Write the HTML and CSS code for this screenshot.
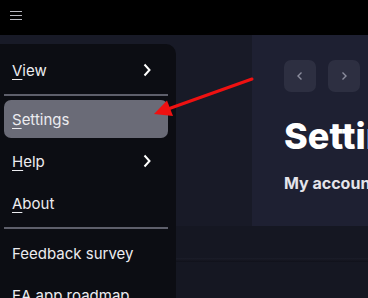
FILE: index.html
```html
<!DOCTYPE html>
<html lang="en">
<head>
  <meta charset="UTF-8" />
  <title>EA app - Settings</title>
  <link rel="stylesheet" href="styles.css">
</head>
<body>

  <header class="topbar">
    <span class="burger"><i></i><i></i><i></i></span>
  </header>

  <div class="main">
    <div class="side-strip"></div>
    <section class="panel">
      <div class="nav-btns">
        <button class="nav-btn" aria-label="Back">
          <svg viewBox="0 0 12 12"><path d="M7.5 2.5 4 6l3.5 3.5"/></svg>
        </button>
        <button class="nav-btn" aria-label="Forward">
          <svg viewBox="0 0 12 12"><path d="M4.5 2.5 8 6l-3.5 3.5"/></svg>
        </button>
      </div>
      <h1 class="title">Settings</h1>
      <h2 class="subtitle">My account</h2>
    </section>
  </div>

  <div class="bottom">
    <div class="bottom-line"></div>
  </div>

  <!-- Menu deroulant -->
  <nav class="menu">
    <div class="menu-item"><span><u>V</u>iew</span><svg class="chev" viewBox="0 0 8 14"><path d="M1.5 1.5 6.5 7l-5 5.5"/></svg></div>
    <hr class="sep">
    <div class="menu-item active"><span><u>S</u>ettings</span></div>
    <div class="menu-item"><span><u>H</u>elp</span><svg class="chev" viewBox="0 0 8 14"><path d="M1.5 1.5 6.5 7l-5 5.5"/></svg></div>
    <div class="menu-item"><span><u>A</u>bout</span></div>
    <hr class="sep">
    <div class="menu-item"><span>Feedback survey</span></div>
    <div class="menu-item"><span>EA app roadmap</span></div>
  </nav>

  <!-- Fleche rouge -->
  <svg class="arrow" viewBox="0 0 368 298" aria-hidden="true">
    <line x1="252" y1="79" x2="168" y2="109" />
    <polygon points="154,114 167,100.5 173,116" />
  </svg>

</body>
</html>
```

FILE: styles.css
```css
/* Base */
html, body {
  margin: 0;
  padding: 0;
  height: 100%;
  overflow: hidden;
  background: #151722;
  font-family: 'Inter', 'Noto Sans', sans-serif;
  color: #ececf0;
}

body {
  position: relative;
  display: flex;
  flex-direction: column;
}

/* Barre du haut */
.topbar {
  height: 35px;
  background: #000;
  display: flex;
  align-items: flex-start;
  padding: 11px 0 0 10px;
  box-sizing: border-box;
  flex-shrink: 0;
}

.burger {
  display: flex;
  flex-direction: column;
  gap: 3px;
  width: 12px;
}
.burger i {
  display: block;
  height: 1px;
  background: #b8b8c0;
}

/* Zone principale */
.main {
  display: flex;
  height: 191px;
  flex-shrink: 0;
}

.side-strip {
  width: 252px;
  background: #181a27;
}

.panel {
  flex: 1;
  background: #1e2032;
  padding: 25px 0 0 32px;
  overflow: hidden;
  white-space: nowrap;
}

.nav-btns {
  display: flex;
  gap: 12px;
}

.nav-btn {
  width: 32px;
  height: 32px;
  border: none;
  border-radius: 7px;
  background: #2d2f41;
  padding: 0;
  display: flex;
  align-items: center;
  justify-content: center;
}
.nav-btn svg {
  width: 12px;
  height: 12px;
  fill: none;
  stroke: #8c8e9e;
  stroke-width: 1.4;
}

.title {
  margin: 22px 0 0;
  font-size: 36px;
  font-weight: 800;
  line-height: 44px;
  color: #fff;
}

.subtitle {
  margin: 15px 0 0;
  font-size: 16px;
  font-weight: 700;
  color: #e4e4ea;
}

/* Bas de page */
.bottom {
  flex: 1;
  background: #151722;
  padding-top: 32px;
}
.bottom-line {
  height: 4px;
  background: linear-gradient(to bottom, #1b1d29, #10111a);
}

/* Menu */
.menu {
  position: absolute;
  top: 44px;
  left: 0;
  width: 176px;
  bottom: 0;
  background: #0c0d13;
  border-radius: 0 10px 0 0;
  padding-top: 5px;
  box-sizing: border-box;
  overflow: hidden;
}

.menu-item {
  height: 42px;
  margin: 0 8px 0 4px;
  padding: 0 17px 0 8px;
  display: flex;
  align-items: center;
  justify-content: space-between;
  font-size: 15px;
  color: #ececf0;
  border-radius: 7px;
}
.menu-item u {
  text-underline-offset: 3px;
  text-decoration-thickness: 1px;
}

.menu-item.active {
  height: 38px;
  margin-top: 4px;
  margin-bottom: 2px;
  background: #6a6b77;
}

.chev {
  width: 8px;
  height: 14px;
  fill: none;
  stroke: #fff;
  stroke-width: 2;
}

.sep {
  margin: 3px 8px 3px 4px;
  border: none;
  height: 2px;
  background: #5e5f6b;
}

/* Fleche */
.arrow {
  position: absolute;
  top: 0;
  left: 0;
  width: 368px;
  height: 298px;
  pointer-events: none;
}
.arrow line {
  stroke: #ee1111;
  stroke-width: 3;
  stroke-linecap: round;
}
.arrow polygon {
  fill: #ee1111;
}
```
